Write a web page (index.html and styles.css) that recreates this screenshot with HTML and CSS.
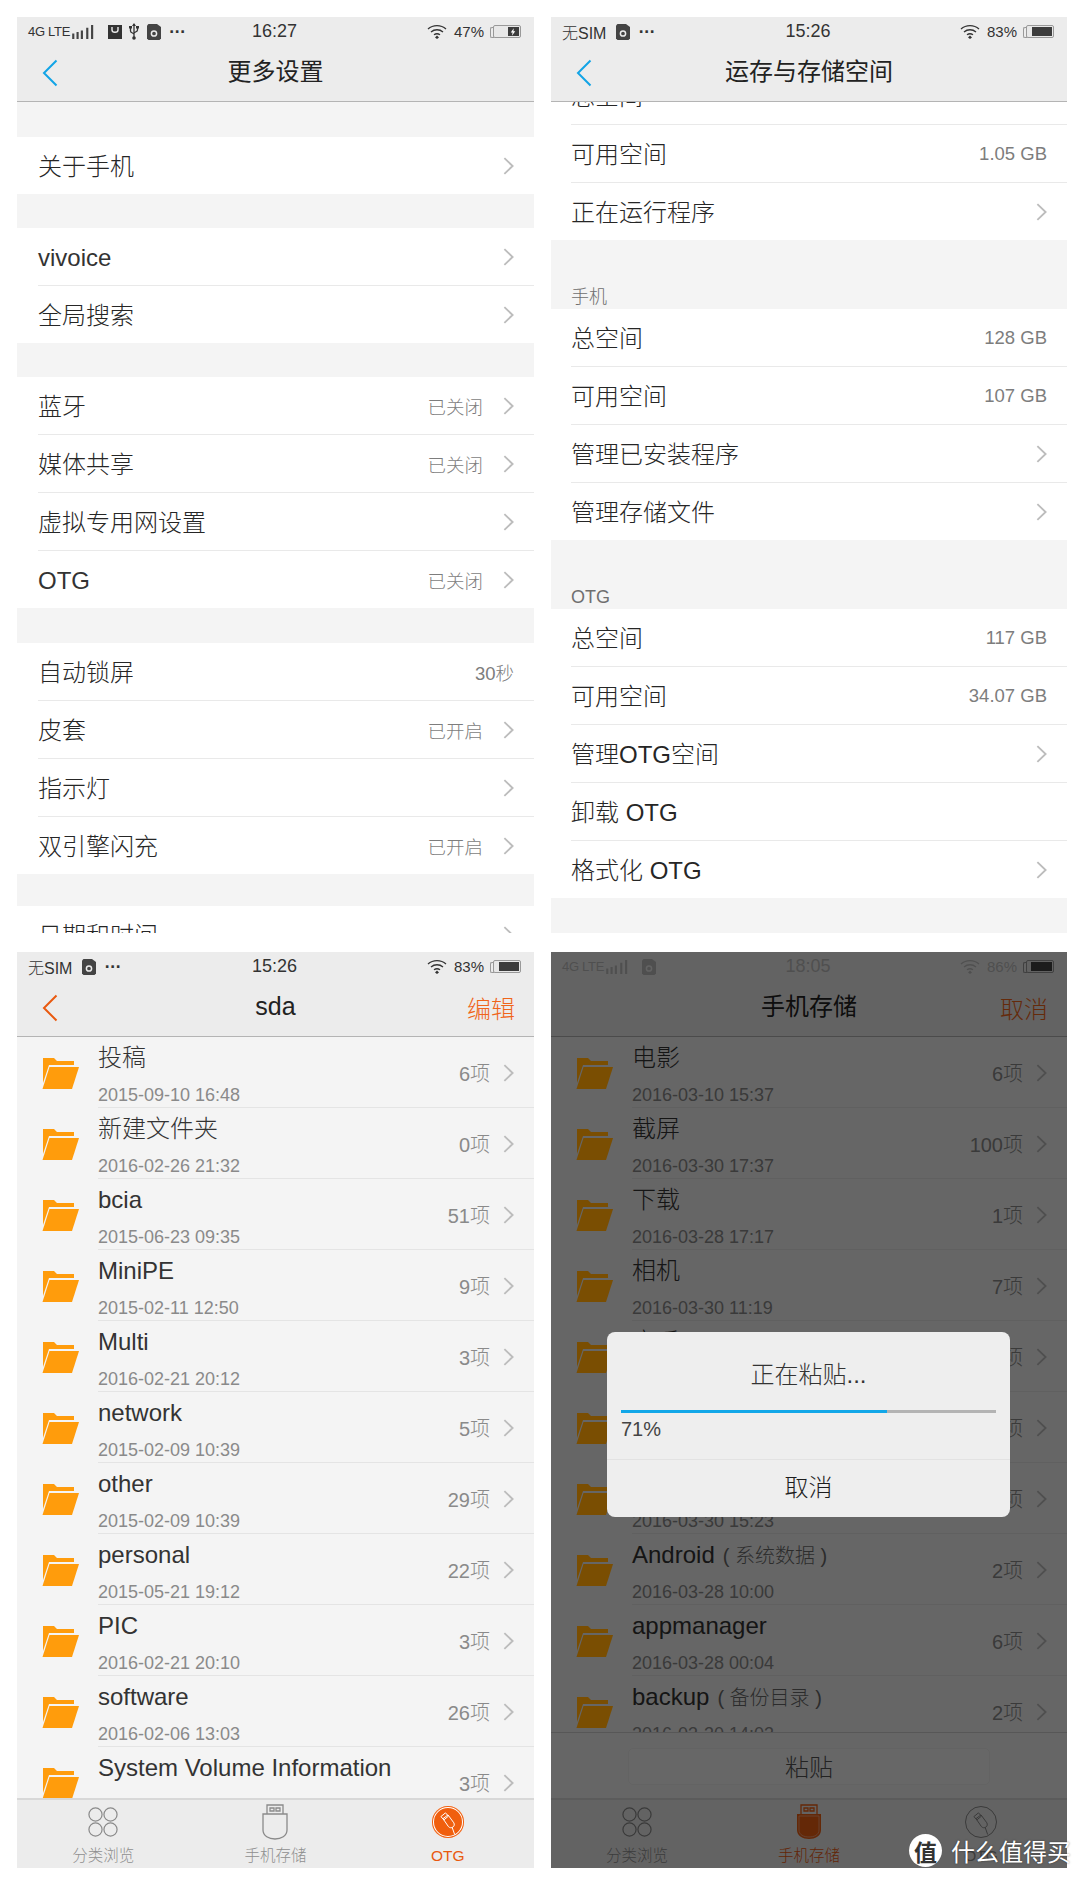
FILE: index.html
```html
<!DOCTYPE html>
<html lang="zh-CN">
<head>
<meta charset="utf-8">
<title>vivo 设置截图</title>
<link rel="stylesheet" href="styles.css">
</head>
<body>
<svg class="defs" aria-hidden="true">
  <symbol id="chev" viewBox="0 0 12 20"><path d="M1.5 1.5 10.5 10 1.5 18.5" fill="none" stroke="currentColor" stroke-width="2"/></symbol>
  <symbol id="back" viewBox="0 0 16 28"><path d="M14.5 1.5 2 14l12.500 12.500" fill="none" stroke="currentColor" stroke-width="2"/></symbol>
  <symbol id="folder" viewBox="0 0 38 32"><path d="M2 1H13L16 4H33V8H8L2 26Z" fill="currentColor"/><path d="M8.500 10H38L31 32H1.500Z" fill="currentColor"/></symbol>
  <symbol id="wifi" viewBox="0 0 20 15"><path d="M1 5C6 .5 14 .5 19 5M4 8c3.500-3 8.500-3 12 0M7 10.800c1.800-1.300 4.200-1.300 6 0" fill="none" stroke="currentColor" stroke-width="1.300"/><path d="M10 11.500 12 13.500 10 15 8 13.500Z" fill="currentColor"/></symbol>
  <symbol id="sd" viewBox="0 0 14 16"><path d="M0 1.500 1.500 0H10L14 3V14.500L12.500 16H1.500L0 14.500Z" fill="currentColor"/><circle cx="7" cy="9.500" r="2.600" fill="none" stroke="#ececec" stroke-width="1.500"/></symbol>
  <symbol id="signal" viewBox="0 0 21 13"><path d="M1 8v5M5 6.500V13M9 5v8M14 2.500V13M18.500 0V13" stroke="currentColor" stroke-width="2"/></symbol>
  <symbol id="bag" viewBox="0 0 14 14"><path d="M0 0H14V14H0Z" fill="currentColor"/><path d="M4 2V5C4 8 10 8 10 5V2" fill="none" stroke="#ececec" stroke-width="1.400"/></symbol>
  <symbol id="usbmark" viewBox="0 0 10 17"><path d="M5 1V16M1.500 5V8C1.500 10 5 10 5 11.500M8.500 5V7C8.500 9 5 9 5 10.500" fill="none" stroke="currentColor" stroke-width="1.300"/><path d="M5 0 7 3H3ZM0 3H3V5.500H0ZM7 3H10V5.500H7Z" fill="currentColor"/><circle cx="5" cy="15" r="1.800" fill="currentColor"/></symbol>
  <symbol id="bolt" viewBox="0 0 8 10"><path d="M5 0 1 5.500H3.500L2.500 10 7 4H4.500Z" fill="currentColor"/></symbol>
  <symbol id="grid4" viewBox="0 0 32 32"><g fill="none" stroke="currentColor" stroke-width="1.300"><circle cx="8" cy="8" r="7"/><circle cx="24" cy="8" r="7"/><circle cx="8" cy="24" r="7"/><circle cx="24" cy="24" r="7"/></g></symbol>
  <symbol id="usb" viewBox="0 0 26 36"><g fill="none" stroke="currentColor" stroke-width="1.300"><path d="M5 10V1H21V10M8 4H12V7H8ZM14 4H18V7H14Z"/><path d="M1 10H25V26C25 32 19 35 13 35S1 32 1 26Z"/></g></symbol>
  <symbol id="usbfull" viewBox="0 0 26 36"><path d="M1 10H25V26C25 32 19 35 13 35S1 32 1 26Z" fill="currentColor"/><path d="M3 12H23V26C23 31 18 33 13 33S3 31 3 26Z" fill="none" stroke="#f3a884" stroke-width=".8"/><path d="M5 10V1H21V10M8 4H12V7H8ZM14 4H18V7H14Z" fill="none" stroke="currentColor" stroke-width="1.300"/></symbol>
  <symbol id="otgplug" viewBox="0 0 36 36"><g fill="none" stroke="currentColor" stroke-width="1.200"><path d="M9.500 11.500 15 7 18.500 11 13 15.500Z"/><path d="M12 14 18 9.500 25 19C26 21 25.500 23 24 24 22 25.500 20 25 18.500 23.500Z"/><path d="M23 24.500 26 33"/></g></symbol>
</svg>

<main class="sheet">

  <section class="phone">
    <div class="top">
      <div class="status">
        <div class="st-left">
          <span class="net">4G LTE</span><svg class="ic-signal"><use href="#signal"/></svg>
          <svg class="ic-bag"><use href="#bag"/></svg>
          <svg class="ic-usbmark"><use href="#usbmark"/></svg>
          <svg class="ic-sd"><use href="#sd"/></svg>
          <span class="dots">···</span>
        </div>
        <div class="time">16:27</div>
        <div class="st-right"><svg class="ic-wifi"><use href="#wifi"/></svg><span>47%</span><span class="batt"><span class="level" style="width:47%"><svg class="ic-bolt"><use href="#bolt"/></svg></span></span></div>
      </div>
      <div class="nav">
        <svg class="ic-back"><use href="#back"/></svg>
        <div class="title">更多设置</div>
      </div>
    </div>
    <div class="body body-settings">
      <div class="gap gap-first"></div>
      <div class="group">
        <div class="row row-last"><span class="label">关于手机</span><svg class="chev"><use href="#chev"/></svg></div>
      </div>
      <div class="gap"></div>
      <div class="group">
        <div class="row"><span class="label label-latin">vivoice</span><svg class="chev"><use href="#chev"/></svg></div>
        <div class="row row-last"><span class="label">全局搜索</span><svg class="chev"><use href="#chev"/></svg></div>
      </div>
      <div class="gap"></div>
      <div class="group">
        <div class="row"><span class="label">蓝牙</span><span class="right"><span class="val">已关闭</span><svg class="chev"><use href="#chev"/></svg></span></div>
        <div class="row"><span class="label">媒体共享</span><span class="right"><span class="val">已关闭</span><svg class="chev"><use href="#chev"/></svg></span></div>
        <div class="row"><span class="label">虚拟专用网设置</span><svg class="chev"><use href="#chev"/></svg></div>
        <div class="row row-last"><span class="label label-latin">OTG</span><span class="right"><span class="val">已关闭</span><svg class="chev"><use href="#chev"/></svg></span></div>
      </div>
      <div class="gap gap-wide"></div>
      <div class="group">
        <div class="row"><span class="label">自动锁屏</span><span class="val val-end">30秒</span></div>
        <div class="row"><span class="label">皮套</span><span class="right"><span class="val">已开启</span><svg class="chev"><use href="#chev"/></svg></span></div>
        <div class="row"><span class="label">指示灯</span><svg class="chev"><use href="#chev"/></svg></div>
        <div class="row row-last"><span class="label">双引擎闪充</span><span class="right"><span class="val">已开启</span><svg class="chev"><use href="#chev"/></svg></span></div>
      </div>
      <div class="gap gap-last"></div>
      <div class="group">
        <div class="row"><span class="label">日期和时间</span><svg class="chev"><use href="#chev"/></svg></div>
      </div>
    </div>
  </section>

  <section class="phone">
    <div class="top">
      <div class="status">
        <div class="st-left">
          <span class="nosim">无SIM</span>
          <svg class="ic-sd"><use href="#sd"/></svg>
          <span class="dots">···</span>
        </div>
        <div class="time">15:26</div>
        <div class="st-right"><svg class="ic-wifi"><use href="#wifi"/></svg><span>83%</span><span class="batt"><span class="level" style="width:83%"></span></span></div>
      </div>
      <div class="nav">
        <svg class="ic-back"><use href="#back"/></svg>
        <div class="title">运存与存储空间</div>
      </div>
    </div>
    <div class="body body-storage">
      <div class="group group-pulled">
        <div class="row"><span class="label">总空间</span><span class="val val-end">1.95 GB</span></div>
        <div class="row"><span class="label">可用空间</span><span class="val val-end">1.05 GB</span></div>
        <div class="row row-last"><span class="label">正在运行程序</span><svg class="chev"><use href="#chev"/></svg></div>
      </div>
      <div class="sect">手机</div>
      <div class="group">
        <div class="row"><span class="label">总空间</span><span class="val val-end">128 GB</span></div>
        <div class="row"><span class="label">可用空间</span><span class="val val-end">107 GB</span></div>
        <div class="row"><span class="label">管理已安装程序</span><svg class="chev"><use href="#chev"/></svg></div>
        <div class="row row-last"><span class="label">管理存储文件</span><svg class="chev"><use href="#chev"/></svg></div>
      </div>
      <div class="sect">OTG</div>
      <div class="group">
        <div class="row"><span class="label">总空间</span><span class="val val-end">117 GB</span></div>
        <div class="row"><span class="label">可用空间</span><span class="val val-end">34.07 GB</span></div>
        <div class="row"><span class="label">管理OTG空间</span><svg class="chev"><use href="#chev"/></svg></div>
        <div class="row"><span class="label">卸载 OTG</span></div>
        <div class="row row-last"><span class="label">格式化 OTG</span><svg class="chev"><use href="#chev"/></svg></div>
      </div>
    </div>
  </section>

  <section class="phone">
    <div class="top">
      <div class="status">
        <div class="st-left">
          <span class="nosim">无SIM</span>
          <svg class="ic-sd"><use href="#sd"/></svg>
          <span class="dots">···</span>
        </div>
        <div class="time">15:26</div>
        <div class="st-right"><svg class="ic-wifi"><use href="#wifi"/></svg><span>83%</span><span class="batt"><span class="level" style="width:83%"></span></span></div>
      </div>
      <div class="nav">
        <svg class="ic-back ic-back-orange"><use href="#back"/></svg>
        <div class="title title-latin">sda</div>
        <div class="action">编辑</div>
      </div>
    </div>
    <div class="files">
      <div class="file"><svg class="folder"><use href="#folder"/></svg><div class="finfo"><div class="fname">投稿</div><div class="fdate">2015-09-10 16:48</div></div><span class="count">6项</span><svg class="chev"><use href="#chev"/></svg></div>
      <div class="file"><svg class="folder"><use href="#folder"/></svg><div class="finfo"><div class="fname">新建文件夹</div><div class="fdate">2016-02-26 21:32</div></div><span class="count">0项</span><svg class="chev"><use href="#chev"/></svg></div>
      <div class="file"><svg class="folder"><use href="#folder"/></svg><div class="finfo"><div class="fname">bcia</div><div class="fdate">2015-06-23 09:35</div></div><span class="count">51项</span><svg class="chev"><use href="#chev"/></svg></div>
      <div class="file"><svg class="folder"><use href="#folder"/></svg><div class="finfo"><div class="fname">MiniPE</div><div class="fdate">2015-02-11 12:50</div></div><span class="count">9项</span><svg class="chev"><use href="#chev"/></svg></div>
      <div class="file"><svg class="folder"><use href="#folder"/></svg><div class="finfo"><div class="fname">Multi</div><div class="fdate">2016-02-21 20:12</div></div><span class="count">3项</span><svg class="chev"><use href="#chev"/></svg></div>
      <div class="file"><svg class="folder"><use href="#folder"/></svg><div class="finfo"><div class="fname">network</div><div class="fdate">2015-02-09 10:39</div></div><span class="count">5项</span><svg class="chev"><use href="#chev"/></svg></div>
      <div class="file"><svg class="folder"><use href="#folder"/></svg><div class="finfo"><div class="fname">other</div><div class="fdate">2015-02-09 10:39</div></div><span class="count">29项</span><svg class="chev"><use href="#chev"/></svg></div>
      <div class="file"><svg class="folder"><use href="#folder"/></svg><div class="finfo"><div class="fname">personal</div><div class="fdate">2015-05-21 19:12</div></div><span class="count">22项</span><svg class="chev"><use href="#chev"/></svg></div>
      <div class="file"><svg class="folder"><use href="#folder"/></svg><div class="finfo"><div class="fname">PIC</div><div class="fdate">2016-02-21 20:10</div></div><span class="count">3项</span><svg class="chev"><use href="#chev"/></svg></div>
      <div class="file"><svg class="folder"><use href="#folder"/></svg><div class="finfo"><div class="fname">software</div><div class="fdate">2016-02-06 13:03</div></div><span class="count">26项</span><svg class="chev"><use href="#chev"/></svg></div>
      <div class="file"><svg class="folder"><use href="#folder"/></svg><div class="finfo"><div class="fname">System Volume Information</div><div class="fdate">2016-03-03 14:54</div></div><span class="count">3项</span><svg class="chev"><use href="#chev"/></svg></div>
    </div>
    <div class="tabs">
      <div class="tab"><svg class="tab-ic"><use href="#grid4"/></svg><span>分类浏览</span></div>
      <div class="tab"><svg class="tab-ic"><use href="#usb"/></svg><span>手机存储</span></div>
      <div class="tab tab-on"><span class="otg-disc"><svg class="otg-plug"><use href="#otgplug"/></svg></span><span>OTG</span></div>
    </div>
  </section>

  <section class="phone phone-dimmed">
    <div class="top">
      <div class="status status-faded">
        <div class="st-left">
          <span class="net">4G LTE</span><svg class="ic-signal"><use href="#signal"/></svg>
          <svg class="ic-sd"><use href="#sd"/></svg>
        </div>
        <div class="time">18:05</div>
        <div class="st-right"><svg class="ic-wifi"><use href="#wifi"/></svg><span>86%</span><span class="batt"><span class="level" style="width:86%"></span></span></div>
      </div>
      <div class="nav">
        <div class="title">手机存储</div>
        <div class="action">取消</div>
      </div>
    </div>
    <div class="files">
      <div class="file"><svg class="folder"><use href="#folder"/></svg><div class="finfo"><div class="fname">电影</div><div class="fdate">2016-03-10 15:37</div></div><span class="count">6项</span><svg class="chev"><use href="#chev"/></svg></div>
      <div class="file"><svg class="folder"><use href="#folder"/></svg><div class="finfo"><div class="fname">截屏</div><div class="fdate">2016-03-30 17:37</div></div><span class="count">100项</span><svg class="chev"><use href="#chev"/></svg></div>
      <div class="file"><svg class="folder"><use href="#folder"/></svg><div class="finfo"><div class="fname">下载</div><div class="fdate">2016-03-28 17:17</div></div><span class="count">1项</span><svg class="chev"><use href="#chev"/></svg></div>
      <div class="file"><svg class="folder"><use href="#folder"/></svg><div class="finfo"><div class="fname">相机</div><div class="fdate">2016-03-30 11:19</div></div><span class="count">7项</span><svg class="chev"><use href="#chev"/></svg></div>
      <div class="file"><svg class="folder"><use href="#folder"/></svg><div class="finfo"><div class="fname">音乐</div><div class="fdate">2016-03-30 15:20</div></div><span class="count">3项</span><svg class="chev"><use href="#chev"/></svg></div>
      <div class="file"><svg class="folder"><use href="#folder"/></svg><div class="finfo"><div class="fname">视频</div><div class="fdate">2016-03-30 15:21</div></div><span class="count">4项</span><svg class="chev"><use href="#chev"/></svg></div>
      <div class="file"><svg class="folder"><use href="#folder"/></svg><div class="finfo"><div class="fname">图片</div><div class="fdate">2016-03-30 15:23</div></div><span class="count">5项</span><svg class="chev"><use href="#chev"/></svg></div>
      <div class="file"><svg class="folder"><use href="#folder"/></svg><div class="finfo"><div class="fname">Android<span class="note">( 系统数据 )</span></div><div class="fdate">2016-03-28 10:00</div></div><span class="count">2项</span><svg class="chev"><use href="#chev"/></svg></div>
      <div class="file"><svg class="folder"><use href="#folder"/></svg><div class="finfo"><div class="fname">appmanager</div><div class="fdate">2016-03-28 00:04</div></div><span class="count">6项</span><svg class="chev"><use href="#chev"/></svg></div>
      <div class="file"><svg class="folder"><use href="#folder"/></svg><div class="finfo"><div class="fname">backup<span class="note">( 备份目录 )</span></div><div class="fdate">2016-03-30 14:03</div></div><span class="count">2项</span><svg class="chev"><use href="#chev"/></svg></div>
    </div>
    <div class="pastebar"><div class="pastebtn">粘贴</div></div>
    <div class="tabs">
      <div class="tab"><svg class="tab-ic"><use href="#grid4"/></svg><span>分类浏览</span></div>
      <div class="tab tab-on"><svg class="tab-ic"><use href="#usbfull"/></svg><span>手机存储</span></div>
      <div class="tab"><span class="otg-ring"><svg class="otg-plug"><use href="#otgplug"/></svg></span><span>OTG</span></div>
    </div>
    <div class="dim"></div>
    <div class="dialog">
      <div class="dlg-title">正在粘贴...</div>
      <div class="progress"><div class="progress-fill" style="width:71%"></div></div>
      <div class="dlg-pct">71%</div>
      <div class="dlg-cancel">取消</div>
    </div>
  </section>

  <div class="mark"><span class="mark-disc">值</span><span class="mark-text">什么值得买</span></div>
</main>
</body>
</html>
```
FILE: styles.css
```css
* { box-sizing: border-box; }
html, body { margin: 0; padding: 0; background: #fff; }
body {
  width: 1080px;
  height: 1878px;
  overflow: hidden;
  font-family: "Liberation Sans", "Noto Sans CJK SC", sans-serif;
  font-weight: 300;
  color: #222;
}
.defs { position: absolute; width: 0; height: 0; }

.sheet {
  position: relative;
  display: grid;
  grid-template-columns: 517px 516px;
  grid-template-rows: 916px 916px;
  column-gap: 17px;
  row-gap: 19px;
  padding: 17px 0 0 17px;
}
.phone {
  position: relative;
  display: flex;
  flex-direction: column;
  overflow: hidden;
  background: #f4f4f4;
}

/* header */
.top {
  position: relative;
  z-index: 2;
  flex: none;
  background: #ececec;
  border-bottom: 1px solid #b4b4b4;
}
.status {
  display: grid;
  grid-template-columns: 1fr auto 1fr;
  align-items: center;
  height: 29px;
  padding: 0 13px 0 11px;
  color: #333;
}
.st-left, .st-right { display: flex; align-items: center; }
.st-right { justify-content: flex-end; font-size: 15px; }
.time { font-size: 18px; }
.net { font-size: 13px; letter-spacing: -.3px; margin-right: 2px; }
.nosim { font-size: 16px; margin-right: 10px; }
.ic-signal { width: 23px; height: 14px; color: #444; margin-right: 13px; }
.ic-bag { width: 14px; height: 14px; color: #333; margin-right: 7px; }
.ic-usbmark { width: 10px; height: 17px; color: #333; margin-right: 8px; }
.ic-sd { width: 14px; height: 16px; color: #444; margin-right: 8px; }
.dots { font: 700 14px "DejaVu Sans", sans-serif; color: #333; letter-spacing: .2px; }
.ic-wifi { width: 20px; height: 15px; color: #333; margin-right: 7px; }
.batt {
  position: relative;
  display: flex;
  justify-content: flex-end;
  width: 28px;
  height: 13px;
  margin-left: 9px;
  padding: 1px;
  border: 1px solid #999;
  border-radius: 2px;
  background: #e8e8e8;
}
.batt::before {
  content: "";
  position: absolute;
  left: -4px;
  top: 1px;
  width: 3px;
  height: 9px;
  border: 1px solid #999;
  border-right: 0;
  border-radius: 2px 0 0 2px;
}
.level { display: flex; align-items: center; justify-content: center; height: 100%; background: #3c3c3c; }
.ic-bolt { width: 6px; height: 8px; color: #fff; }
.status-faded { color: #bdbdbd; }
.status-faded .ic-signal, .status-faded .ic-sd, .status-faded .ic-wifi { color: #bdbdbd; }
.status-faded .level { background: #444; }
.nav {
  position: relative;
  display: flex;
  align-items: center;
  justify-content: center;
  height: 55px;
  padding-bottom: 4px;
}
.ic-back {
  position: absolute;
  left: 25px;
  top: 13px;
  width: 16px;
  height: 28px;
  color: #12a4e6;
}
.ic-back-orange { color: #e9590f; }
.title { font-size: 24px; line-height: 34px; font-weight: 400; color: #222; }
.title-latin { font-weight: 300; font-size: 25px; padding-bottom: 1px; }
.action {
  position: absolute;
  right: 19px;
  top: 12px;
  line-height: 34px;
  font-size: 24px;
  color: #f0651a;
}

/* settings list */
.body { flex: 1; overflow: hidden; }
.gap { height: 34px; }
.gap-first { height: 35px; }
.gap-wide { height: 35px; }
.gap-last { height: 32px; }
.group { background: #fff; }
.group-pulled { margin-top: -35px; }
.row {
  display: flex;
  align-items: center;
  justify-content: space-between;
  height: 58px;
  margin-left: 20px;
  padding-right: 20px;
  border-bottom: 1px solid #e9e9e9;
}
.body-settings .row { margin-left: 21px; }
.row-last { height: 57px; border-bottom: 0; }
.label { font-size: 24px; color: #262626; padding-bottom: 3px; }
.label-latin { padding-bottom: 0; padding-top: 2px; color: #333; }
.right { display: flex; align-items: center; }
.val { font-size: 18.5px; color: #7d7d7d; margin-right: 20px; }
.val-end { margin-right: 0; }
.chev { flex: none; width: 11px; height: 20px; color: #bcbcbc; }
.sect {
  display: flex;
  align-items: flex-end;
  height: 69px;
  padding: 0 0 1px 20px;
  font-size: 18px;
  color: #6f6f6f;
}

/* file lists */
.files { flex: 1; min-height: 0; overflow: hidden; }
.file {
  position: relative;
  display: flex;
  align-items: center;
  height: 71px;
  padding-right: 20px;
}
.file::after {
  content: "";
  position: absolute;
  left: 81px;
  right: 0;
  bottom: 0;
  height: 1px;
  background: #e4e4e4;
}
.folder { flex: none; width: 38px; height: 32px; margin: 0 19px 0 24px; color: #ff9c0c; }
.finfo {
  flex: 1;
  align-self: stretch;
  min-width: 0;
  padding-top: 5px;
  white-space: nowrap;
}
.fname { height: 32px; line-height: 32px; font-size: 24px; color: #333; }
.fdate { height: 29px; margin-top: 4px; line-height: 34px; font-size: 18px; color: #8a8a8a; }
.note { margin-left: 8px; font-size: 20px; color: #6a6a6a; }
.count { flex: none; margin-right: 13px; font-size: 20px; color: #8a8a8a; }

/* tab bar */
.tabs {
  flex: none;
  display: grid;
  grid-template-columns: 1fr 1fr 1fr;
  height: 70px;
  background: #ececec;
  border-top: 2px solid #d8d8d8;
}
.tab {
  display: flex;
  flex-direction: column;
  align-items: center;
  justify-content: space-between;
  padding: 4px 0 4px;
  font-size: 15.5px;
  line-height: 17px;
  color: #8f8f8f;
}
.tab-on { color: #e9590f; }
.tab-ic { width: 30px; height: 36px; color: #8a8a8a; }
.tab-on .tab-ic { color: #ee5f12; }
.otg-disc, .otg-ring {
  display: flex;
  align-items: center;
  justify-content: center;
  width: 32px;
  height: 32px;
  margin-top: 2px;
  border-radius: 50%;
}
.otg-disc { background: #f05f0e; box-shadow: inset 0 0 0 1px #f05f0e, inset 0 0 0 2px #fff; color: #fff; }
.otg-ring { border: 1px solid #8a8a8a; color: #8a8a8a; }
.otg-plug { width: 30px; height: 30px; }

/* paste bar */
.pastebar {
  flex: none;
  height: 66px;
  padding: 15px 0 0 77px;
  background: #f4f4f4;
  border-top: 1px solid #d0d0d0;
}
.pastebtn {
  width: 362px;
  height: 37px;
  line-height: 37px;
  text-align: center;
  font-size: 24px;
  color: #555;
  background: #f6f6f6;
  border: 1px solid #ececec;
  border-radius: 5px;
}

/* dimming + dialog */
.dim { position: absolute; inset: 0; z-index: 3; background: rgba(0, 0, 0, .58); }
.phone-dimmed .folder { position: relative; z-index: 4; color: #7a4e02; }
.dialog {
  position: absolute;
  z-index: 5;
  left: 56px;
  top: 380px;
  width: 403px;
  height: 185px;
  background: #eee;
  border-radius: 8px;
  padding: 0 14px;
}
.dlg-title {
  height: 78px;
  padding-top: 27px;
  line-height: 32px;
  text-align: center;
  font-size: 24px;
  color: #333;
}
.progress { height: 3px; background: #b3b3b3; }
.progress-fill { height: 100%; background: #12a7e8; }
.dlg-pct { height: 46px; padding-top: 2px; line-height: 28px; font-size: 20px; color: #444; }
.dlg-cancel {
  height: 58px;
  margin: 0 -14px;
  line-height: 56px;
  text-align: center;
  font-size: 24px;
  color: #1d1d1d;
  border-top: 1px solid #e2e2e2;
}

/* watermark over the last screenshot */
.mark {
  position: absolute;
  z-index: 6;
  left: 909px;
  top: 1833px;
  display: flex;
  align-items: center;
  gap: 9px;
  color: #fff;
  white-space: nowrap;
}
.mark-disc {
  display: flex;
  align-items: center;
  justify-content: center;
  width: 33px;
  height: 33px;
  border-radius: 50%;
  background: #fff;
  color: #333;
  font-size: 23px;
  font-weight: 700;
}
.mark-text { font-size: 24px; font-weight: 400; text-shadow: 0 0 2px rgba(0,0,0,.5); }
```
